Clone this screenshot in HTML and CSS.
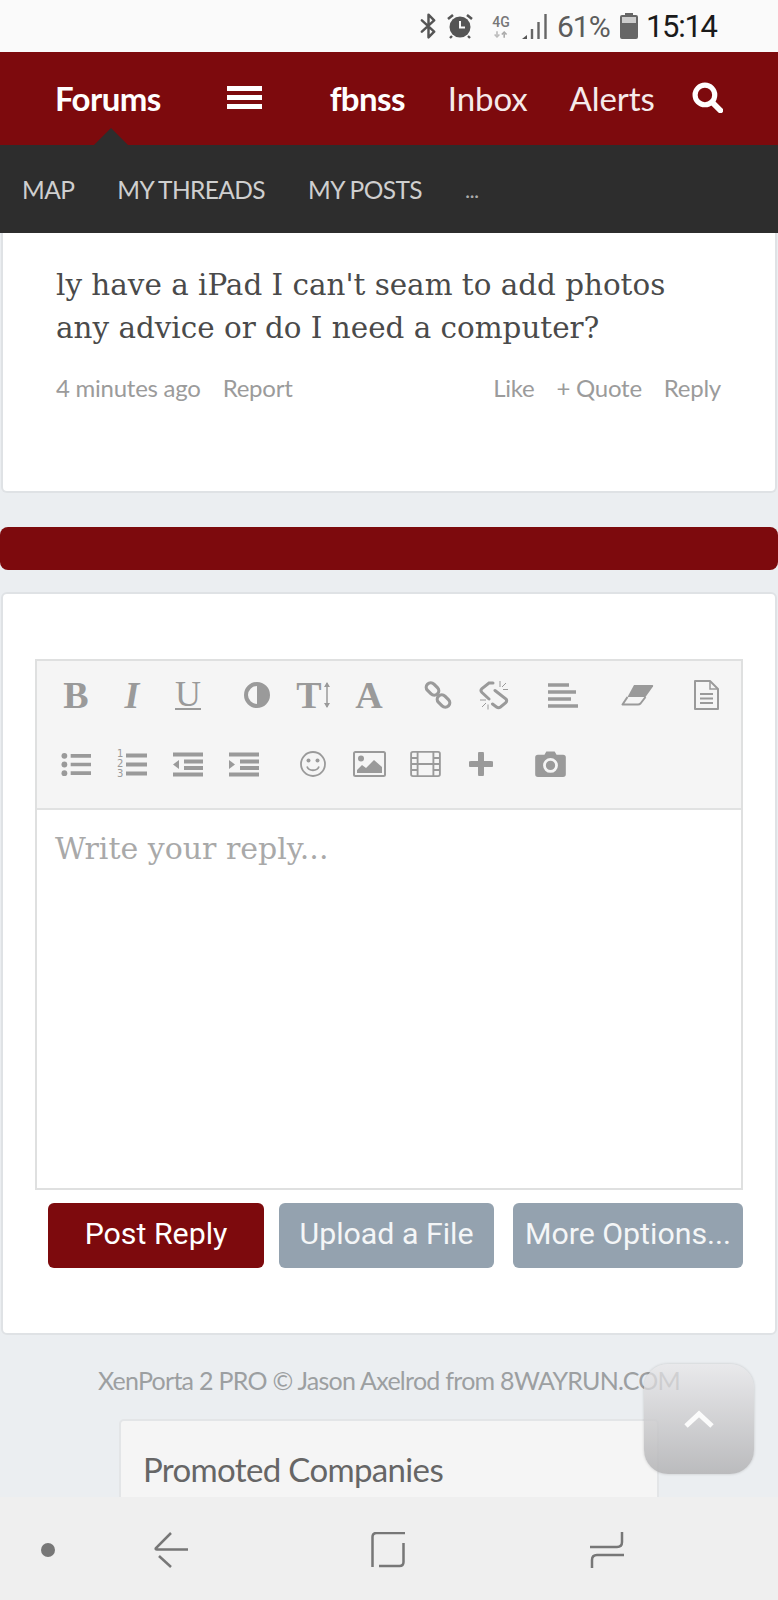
FILE: index.html
```html
<!DOCTYPE html>
<html lang="en">
<head>
<meta charset="utf-8">
<title>Forums</title>
<link rel="stylesheet" href="styles.css">
</head>
<body>
<div class="page">
  <div class="status">
    <svg class="st-bt" viewBox="0 0 18 26"><path d="M2 7l13 12-6 6V1l6 6L2 19" fill="none" stroke="#555" stroke-width="2.6" stroke-linejoin="round" stroke-linecap="round"/></svg>
    <svg class="st-alarm" viewBox="0 0 26 26"><circle cx="13" cy="14" r="10.5" fill="#555"/><path d="M13 8v6.5h5" fill="none" stroke="#fafafa" stroke-width="2"/><path d="M1 6l5-4M25 6l-5-4" stroke="#555" stroke-width="2.6"/><path d="M5 23l-2 2M21 23l2 2" stroke="#555" stroke-width="2.4"/></svg>
    <div class="st-net"><span class="st-4g">4G</span><svg class="st-arrows" viewBox="0 0 20 8"><path d="M5 0v5M2 4l3 3 3-3" fill="none" stroke="#bbb" stroke-width="2"/><path d="M14 8V3M11 4l3-3 3 3" fill="none" stroke="#aaa" stroke-width="2"/></svg></div>
    <svg class="st-signal" viewBox="0 0 26 26"><path d="M0 26l5-4v4z" fill="#555"/><path d="M10 26V16M16.500 26V9M23.500 26V1" stroke="#666" stroke-width="2.400"/></svg>
    <span class="st-pct">61%</span>
    <svg class="st-batt" viewBox="0 0 18 26"><path d="M5 0h8v2h3a2 2 0 0 1 2 2v20a2 2 0 0 1-2 2H2a2 2 0 0 1-2-2V4a2 2 0 0 1 2-2h3z" fill="#666"/><rect x="2" y="4" width="14" height="6" fill="#ccc"/></svg>
    <span class="st-time">15:14</span>
  </div>

  <header class="topbar">
    <a class="top-strong tab-forums">Forums</a>
    <span class="burger"><i></i><i></i><i></i></span>
    <a class="top-strong tab-user">fbnss</a>
    <a class="top-link tab-inbox">Inbox</a>
    <a class="top-link tab-alerts">Alerts</a>
    <svg class="search" viewBox="0 0 30 30"><circle cx="12.500" cy="12.500" r="9.500" fill="none" stroke="#fff" stroke-width="5"/><path d="M19.500 19.500l8 8" stroke="#fff" stroke-width="5.500" stroke-linecap="round"/></svg>
    <span class="notch"></span>
  </header>

  <nav class="subnav">
    <a>MAP</a><a>MY THREADS</a><a>MY POSTS</a><a class="more">...</a>
  </nav>

  <section class="card post">
    <p class="post-text">ly have a iPad I can't seam to add photos<br>any advice or do I need a computer?</p>
    <div class="meta">
      <a>4 minutes ago</a><a>Report</a>
      <a class="push">Like</a><a>+ Quote</a><a>Reply</a>
    </div>
  </section>

  <div class="redbar"></div>

  <section class="card reply">
    <div class="editor">
      <div class="toolbar">
        <div class="tool-row">
          <div class="group">
            <span class="tool glyph bold">B</span>
            <span class="tool glyph ital">I</span>
            <span class="tool glyph"><span class="under">U</span></span>
          </div>
          <div class="group">
            <span class="tool"><svg class="i26" viewBox="0 0 26 26"><circle cx="13" cy="13" r="11" fill="#f5f5f5" stroke="#9a9a9a" stroke-width="4"/><path d="M13 1a12 12 0 0 1 0 24z" fill="#9a9a9a"/></svg></span>
            <span class="tool glyph bold"><span class="tee">T</span><svg class="updown" viewBox="0 0 6 26"><path d="M3 1v24" stroke="#9a9a9a" stroke-width="1.500"/><path d="M0 5l3-5 3 5zM0 21l3 5 3-5z" fill="#9a9a9a"/></svg></span>
            <span class="tool glyph bold">A</span>
          </div>
          <div class="group">
            <span class="tool"><svg class="i28" viewBox="0 0 28 28"><g fill="none" stroke="#9a9a9a" stroke-width="3.200"><rect x="1.500" y="3.500" width="14" height="9" rx="4.500" transform="rotate(45 8.500 8)"/><rect x="12.500" y="15.500" width="14" height="9" rx="4.500" transform="rotate(45 19.500 20)"/></g></svg></span>
            <span class="tool"><svg class="i30s" viewBox="0 0 30 30"><g fill="none" stroke="#9a9a9a" stroke-width="3" stroke-linecap="round"><path d="M14 3H10L3 8.500Q1 10.500 3 12.500L10 19"/><path d="M16 10.500L27 19Q28.500 21 26.500 23L21.500 27Q19.500 28.500 17.500 27L13.500 24"/></g><path d="M21 1v6M27 3l-4 4M29 9.500h-5M1 20h6M3 27l4-4M9 29.500v-5" stroke="#9a9a9a" stroke-width="1"/></svg></span>
          </div>
          <div class="group">
            <span class="tool"><svg class="i30" viewBox="0 0 30 24"><path d="M0 1.500h21M0 8.500h28M0 15.500h23M0 22.500h30" stroke="#9a9a9a" stroke-width="3.600"/></svg></span>
          </div>
          <div class="group wide">
            <span class="tool"><svg class="i33e" viewBox="0 0 33 22"><path d="M13 1h18c1 0 1.500 .5 1 1.500L24.500 13H6.500z" fill="#9a9a9a"/><path d="M6.500 13L1.500 20.500H17c1 0 2-.5 2.500-1L24.500 13" fill="none" stroke="#9a9a9a" stroke-width="2" stroke-linejoin="round"/></svg></span>
          </div>
          <div class="group">
            <span class="tool"><svg class="i26t" viewBox="0 0 26 30"><path d="M2 1h15l8 8v20H2z" fill="none" stroke="#9a9a9a" stroke-width="2" stroke-linejoin="round"/><path d="M17 1v8h8" fill="none" stroke="#9a9a9a" stroke-width="1.500"/><path d="M7 14h13M7 18.500h13M7 23h13" stroke="#9a9a9a" stroke-width="1.800"/></svg></span>
          </div>
        </div>
        <div class="tool-row">
          <div class="group">
            <span class="tool"><svg class="i30" viewBox="0 0 31 25"><circle cx="3.500" cy="3.500" r="3" fill="#9a9a9a"/><circle cx="3.500" cy="12.500" r="3" fill="#9a9a9a"/><circle cx="3.500" cy="21.500" r="3" fill="#9a9a9a"/><path d="M10 3.500h21M10 12.500h21M10 21.500h21" stroke="#9a9a9a" stroke-width="3.800"/></svg></span>
            <span class="tool"><span class="ol-wrap"><span class="ol-nums">1<br>2<br>3</span><svg class="ol-bars" viewBox="0 0 21 25"><path d="M0 3.500h21M0 12.500h21M0 21.500h21" stroke="#9a9a9a" stroke-width="3.800"/></svg></span></span>
            <span class="tool"><svg class="i30" viewBox="0 0 30 24"><path d="M0 2h30M11 9h19M11 15.500h19M0 22h30" stroke="#9a9a9a" stroke-width="3.800"/><path d="M6 7.500v9l-6-4.500z" fill="#9a9a9a"/></svg></span>
            <span class="tool"><svg class="i30" viewBox="0 0 30 24"><path d="M0 2h30M11 9h19M11 15.500h19M0 22h30" stroke="#9a9a9a" stroke-width="3.800"/><path d="M0 7.500v9l6-4.500z" fill="#9a9a9a"/></svg></span>
          </div>
          <div class="group">
            <span class="tool"><svg class="i26" viewBox="0 0 26 26"><circle cx="13" cy="13" r="12" fill="none" stroke="#9a9a9a" stroke-width="1.800"/><circle cx="8.500" cy="9.500" r="2" fill="#9a9a9a"/><circle cx="17.500" cy="9.500" r="2" fill="#9a9a9a"/><path d="M7 15.500c2 5 10 5 12 0" fill="none" stroke="#9a9a9a" stroke-width="1.800"/></svg></span>
            <span class="tool"><svg class="i33" viewBox="0 0 33 26"><rect x="1" y="1" width="31" height="24" rx="1.500" fill="none" stroke="#9a9a9a" stroke-width="2"/><circle cx="8" cy="7.500" r="3" fill="#9a9a9a"/><path d="M4 22v-3l5-5 4 3 8-8 8 7v6z" fill="#9a9a9a"/></svg></span>
            <span class="tool"><svg class="i33" viewBox="0 0 33 28"><rect x="1" y="1" width="31" height="26" rx="2" fill="none" stroke="#9a9a9a" stroke-width="2"/><path d="M8 1v26M25 1v26M1 7.500h7M1 14h31M1 20.500h7M25 7.500h7M25 20.500h7" stroke="#9a9a9a" stroke-width="2"/></svg></span>
            <span class="tool"><svg class="i24" viewBox="0 0 24 24"><path d="M12 2v20M2 12h20" stroke="#9a9a9a" stroke-width="6" stroke-linecap="round"/></svg></span>
          </div>
          <div class="group">
            <span class="tool"><svg class="i33" viewBox="0 0 33 28"><path d="M3 4h7l2-3.500h9L23 4h7a3 3 0 0 1 3 3v18a3 3 0 0 1-3 3H3a3 3 0 0 1-3-3V7a3 3 0 0 1 3-3z" fill="#9a9a9a"/><circle cx="16.500" cy="15.500" r="6.500" fill="#9a9a9a" stroke="#f5f5f5" stroke-width="3"/></svg></span>
          </div>
        </div>
      </div>
      <div class="textarea">Write your reply...</div>
    </div>
    <div class="actions">
      <a class="btn primary">Post Reply</a>
      <a class="btn secondary upload">Upload a File</a>
      <a class="btn secondary options">More Options...</a>
    </div>
  </section>

  <p class="credit">XenPorta 2 PRO © Jason Axelrod from 8WAYRUN.COM</p>

  <section class="promo"><h3>Promoted Companies</h3></section>

  <div class="totop"><svg viewBox="0 0 32 20"><path d="M3 17L16 5l13 12" fill="none" stroke="#fff" stroke-width="5" opacity=".9"/></svg></div>

  <div class="navbar">
    <span class="nav-dot"></span>
    <svg class="nav-back" viewBox="0 0 34 36"><path d="M17 1L2 16q-1 1.500 1 1.500H34" fill="none" stroke="#777" stroke-width="2.500"/><path d="M5 24L17 35" stroke="#777" stroke-width="2.500"/></svg>
    <svg class="nav-home" viewBox="0 0 34 36"><path d="M1.500 35V5q0-4 4-4H34" fill="none" stroke="#777" stroke-width="2.500"/><path d="M32.500 11V30q0 4-4 4H8" fill="none" stroke="#777" stroke-width="2.500"/></svg>
    <svg class="nav-recent" viewBox="0 0 34 36"><path d="M0 15H27q5 0 5-5V0" fill="none" stroke="#777" stroke-width="2.500"/><path d="M34 23H7q-5 0-5 5V36" fill="none" stroke="#777" stroke-width="2.500"/></svg>
  </div>
</div>
</body>
</html>
```

FILE: styles.css
```css
* { box-sizing: border-box; }
html, body { margin: 0; padding: 0; }
.page {
  position: relative;
  width: 778px;
  height: 1600px;
  overflow: hidden;
  background: #ebeef1;
  font-family: Lato, "Liberation Sans", sans-serif;
}

/* status bar */
.status {
  height: 52px;
  background: #fafafa;
  display: flex;
  align-items: center;
  padding-left: 420px;
  color: #555;
  font-family: Roboto, sans-serif;
}
.status svg { display: block; flex: none; }
.st-bt { width: 17px; height: 26px; }
.st-alarm { width: 26px; height: 26px; margin-left: 10px; }
.st-net { width: 22px; margin-left: 17px; display: flex; flex-direction: column; align-items: center; }
.st-4g { font-size: 14px; line-height: 14px; font-weight: 500; color: #777; }
.st-arrows { width: 16px; height: 7px; margin-top: 2px; }
.st-signal { width: 26px; height: 26px; margin-left: 10px; }
.st-pct { font-size: 30px; letter-spacing: -1px; margin-left: 9px; width: 52px; color: #5c5c5c; }
.st-batt { width: 18px; height: 26px; margin-left: 11px; }
.st-time { font-size: 31px; letter-spacing: -1.300px; margin-left: 8px; color: #1a1a1a; }

/* header */
.topbar {
  position: relative;
  height: 93px;
  padding-bottom: 2px;
  background: #7d0a0d;
  display: flex;
  align-items: center;
  padding-left: 55px;
  color: #fff;
}
.top-strong { font-size: 33px; font-weight: 700; letter-spacing: -.6px; }
.top-link { font-size: 33px; font-weight: 400; color: #f6eaea; letter-spacing: -.1px; }
.burger { display: flex; flex-direction: column; gap: 4px; width: 35px; margin-left: 66px; }
.burger i { display: block; height: 5px; background: #fff; }
.tab-user { margin-left: 68px; }
.tab-inbox { margin-left: 43px; }
.tab-alerts { margin-left: 42px; }
.search { width: 31px; height: 31px; margin-left: 37px; }
.notch {
  position: absolute;
  left: 94px;
  bottom: 0;
  width: 0;
  height: 0;
  border-left: 17px solid transparent;
  border-right: 17px solid transparent;
  border-bottom: 17px solid #2d2d2d;
}

/* sub navigation */
.subnav {
  height: 88px;
  background: #2d2d2d;
  display: flex;
  align-items: center;
  gap: 43px;
  padding-left: 22px;
  color: #cfcfcf;
  font-size: 24.500px;
  letter-spacing: -.6px;
  position: relative;
}
.more { color: #aaa; font-size: 22px; }

/* cards */
.card {
  background: #fff;
  margin: 0 1px;
  border: 2px solid #dfe2e5;
  border-radius: 6px;
}
.post {
  height: 260px;
  border-top: 0;
  border-radius: 0 0 6px 6px;
  padding: 31px 54px 0 53px;
}
.post-text {
  margin: 0;
  font-family: "DejaVu Serif", "Liberation Serif", serif;
  font-size: 29.400px;
  line-height: 43px;
  color: #4a4a4a;
  white-space: nowrap;
}
.meta {
  display: flex;
  gap: 22px;
  margin-top: 23px;
  font-size: 24px;
  line-height: 30px;
  letter-spacing: -.25px;
  color: #9b9b9b;
}
.push { margin-left: auto; }

.redbar {
  height: 43px;
  margin-top: 34px;
  background: #7d0a0d;
  border-radius: 8px;
}

.reply {
  height: 743px;
  margin-top: 22px;
  padding: 65px 32px 0;
}
.editor { border: 2px solid #dfe0e0; height: 531px; }
.toolbar {
  height: 149px;
  background: #f5f5f5;
  border-bottom: 2px solid #e1e2e2;
  padding-left: 11px;
}
.tool-row { display: flex; height: 69px; }
.group { display: flex; margin-right: 13px; }
.group.wide { margin-left: 5px; }
.tool {
  width: 56px;
  height: 68px;
  display: flex;
  align-items: center;
  justify-content: center;
  color: #9a9a9a;
}
.tool svg { display: block; flex: none; }
.glyph { font-family: "Liberation Serif", serif; font-size: 38px; line-height: 1; }
.bold { font-weight: 700; }
.ital { font-weight: 700; font-style: italic; }
.under { display: block; font-size: 36px; line-height: 27px; height: 29px; border-bottom: 2px solid #9a9a9a; }
.tee { font-size: 38px; }
.updown { width: 6px; height: 26px; margin-left: 2px; }
.i24 { width: 24px; height: 24px; }
.i26 { width: 26px; height: 26px; }
.i26t { width: 26px; height: 30px; }
.i28 { width: 28px; height: 28px; }
.i30 { width: 30px; height: 25px; }
.i30s { width: 30px; height: 30px; }
.i33 { width: 33px; height: 26px; }
.i33e { width: 33px; height: 22px; }
.ol-wrap { display: flex; align-items: center; gap: 2px; width: 30px; }
.ol-nums { font-family: "DejaVu Sans", sans-serif; font-size: 10px; line-height: 10px; color: #9a9a9a; width: 7px; }
.ol-bars { width: 21px; height: 25px; }

.textarea {
  padding: 20px 18px;
  font-family: "DejaVu Serif", "Liberation Serif", serif;
  font-size: 30px;
  line-height: 38px;
  color: #a9a9a9;
}

.actions {
  display: flex;
  margin-top: 13px;
  padding-left: 13px;
}
.btn {
  height: 65px;
  padding-bottom: 4px;
  border-radius: 6px;
  display: flex;
  align-items: center;
  justify-content: center;
  font-family: Roboto, sans-serif;
  font-size: 30.300px;
  color: #fff;
}
.primary { background: #7d0a0d; width: 216px; }
.secondary { background: #94a2af; color: #f4f6f7; }
.upload { width: 215px; margin-left: 15px; }
.options { width: 230px; margin-left: 19px; }

.credit {
  margin: 30px 0 0;
  padding-left: 98px;
  font-size: 25px;
  line-height: 30px;
  letter-spacing: -.73px;
  color: #9c9fa1;
  white-space: nowrap;
}

.promo {
  margin: 24px 0 0 119px;
  width: 540px;
  height: 160px;
  background: #f5f5f5;
  border: 2px solid #e3e5e7;
  border-radius: 5px;
  padding: 27px 22px;
}
.promo h3 {
  margin: 0;
  font-size: 33px;
  line-height: 42px;
  font-weight: 400;
  letter-spacing: -.65px;
  color: #666;
}

.totop {
  position: absolute;
  left: 644px;
  top: 1364px;
  width: 110px;
  height: 110px;
  border-radius: 24px;
  background: linear-gradient(180deg, rgba(232,231,233,.72) 0%, rgba(180,180,182,.88) 100%);
  box-shadow: 0 0 3px rgba(0,0,0,.18);
  display: flex;
  align-items: center;
  justify-content: center;
}
.totop svg { width: 32px; height: 20px; }

.navbar {
  position: absolute;
  left: 0;
  right: 0;
  bottom: 0;
  height: 103px;
  background: #efefef;
}
.navbar svg { position: absolute; top: 35px; width: 34px; height: 36px; }
.nav-dot {
  position: absolute;
  left: 41px;
  top: 46px;
  width: 14px;
  height: 14px;
  border-radius: 50%;
  background: #777;
}
.nav-back { left: 154px; }
.nav-home { left: 371px; }
.nav-recent { left: 590px; }
```
